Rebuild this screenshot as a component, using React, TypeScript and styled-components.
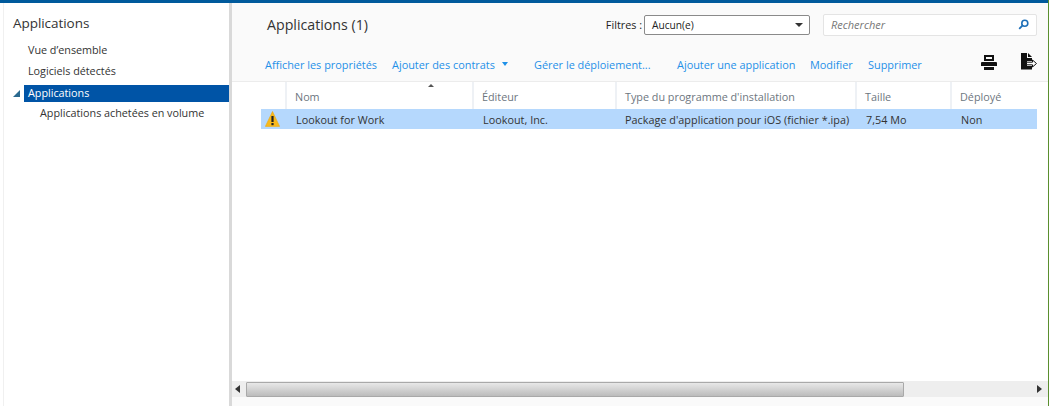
import React from "react";
import styled, { createGlobalStyle } from "styled-components";

const GlobalStyle = createGlobalStyle`
  html, body {
    margin: 0;
    padding: 0;
    background: #fff;
    overflow: hidden;
  }
  body {
    font-family: "Open Sans", "Liberation Sans", sans-serif;
    font-size: 11px;
    color: #333;
  }
`;

const Page = styled.div`
  width: 1049px;
  height: 406px;
  display: flex;
  flex-direction: column;
  box-sizing: border-box;
  border-right: 1px solid #5a8f2e;
`;

const TopBar = styled.div`
  height: 3px;
  background: #005a9c;
  flex: none;
`;

const Body = styled.div`
  flex: 1;
  display: flex;
  min-height: 0;
`;

const Sidebar = styled.nav`
  width: 226px;
  margin-left: 3px;
  border-left: 1px solid #f0f0f0;
  box-sizing: border-box;
  background: #fff;
  flex: none;
  padding-top: 10px;
`;

const SidebarTitle = styled.h2`
  margin: 0 0 6px 9px;
  font-size: 13.5px;
  line-height: 20px;
  font-weight: 400;
  color: #333;
  letter-spacing: -0.05px;
`;

const NavRow = styled.div<{ $selected?: boolean; $indent?: number }>`
  box-sizing: border-box;
  height: ${(p) => (p.$selected ? "17px" : "21px")};
  margin-top: ${(p) => (p.$selected ? "4px" : "0")};
  margin-left: 20px;
  padding-left: ${(p) => p.$indent ?? 4}px;
  padding-bottom: ${(p) => (p.$selected ? "2px" : "0")};
  display: flex;
  align-items: center;
  position: relative;
  font-size: 10.8px;
  letter-spacing: -0.02px;
  color: ${(p) => (p.$selected ? "#fff" : "#333")};
  background: ${(p) => (p.$selected ? "#0054a6" : "transparent")};
`;

const Expander = styled.span`
  position: absolute;
  left: -11px;
  top: 5px;
  width: 0;
  height: 0;
  border-style: solid;
  border-width: 0 0 7px 7px;
  border-color: transparent transparent #2b6a8f transparent;
`;

const Gutter = styled.div`
  width: 3px;
  background: #d9d9d9;
  flex: none;
`;

const Main = styled.main`
  flex: 1;
  min-width: 0;
  display: flex;
  flex-direction: column;
  background: #fafafa;
`;

const Header = styled.div`
  height: 40px;
  flex: none;
  display: flex;
  align-items: center;
  padding: 3px 0 0 35px;
  box-sizing: border-box;
`;

const Title = styled.h1`
  margin: 0;
  font-size: 14.2px;
  font-weight: 400;
  color: #333;
  flex: 1;
`;

const FilterLabel = styled.span`
  font-size: 10.8px;
  color: #222;
  margin-right: 2px;
`;

const FilterSelect = styled.div`
  width: 166px;
  height: 20px;
  box-sizing: border-box;
  border: 1px solid #8a8a8a;
  border-radius: 2px;
  background: #fff;
  display: flex;
  align-items: center;
  justify-content: space-between;
  padding: 0 6px 0 7px;
  font-size: 10.2px;
  color: #222;
  margin-right: 13px;
`;

const SelectCaret = styled.span`
  width: 0;
  height: 0;
  border-style: solid;
  border-width: 4px 4px 0 4px;
  border-color: #333 transparent transparent transparent;
`;

const SearchBox = styled.div`
  width: 214px;
  height: 22px;
  box-sizing: border-box;
  border: 1px solid #e4e4e4;
  border-radius: 2px;
  background: #fff;
  display: flex;
  align-items: center;
  justify-content: space-between;
  padding: 0 7px;
  font-size: 11px;
  font-style: italic;
  color: #777;
  margin-right: 11px;
`;

const Toolbar = styled.div`
  height: 39px;
  flex: none;
  display: flex;
  align-items: center;
  padding: 4px 0 0 33px;
  box-sizing: border-box;
  border-bottom: 1px solid #ececec;
`;

const Action = styled.a<{ $width: number }>`
  width: ${(p) => p.$width}px;
  flex: none;
  font-size: 10.9px;
  color: #1e90e8;
  white-space: nowrap;
  display: flex;
  align-items: center;
  gap: 7px;
`;

const ActionCaret = styled.span`
  width: 0;
  height: 0;
  border-style: solid;
  border-width: 4px 3.5px 0 3.5px;
  border-color: #1e90e8 transparent transparent transparent;
`;

const ToolIcons = styled.div`
  margin-left: auto;
  display: flex;
  gap: 24px;
  margin-right: 11px;
  margin-bottom: 5px;
  align-items: flex-end;
`;

const Table = styled.div`
  flex: 1;
  min-height: 0;
  background: #fff;
  display: flex;
  flex-direction: column;
`;

const HeadRow = styled.div`
  height: 27px;
  flex: none;
  margin-left: 30px;
  margin-right: 11px;
  display: grid;
  grid-template-columns: 23px 187px 143px 240px 95px 1fr;
`;

const HeadCell = styled.div<{ $sorted?: boolean }>`
  position: relative;
  display: flex;
  align-items: flex-end;
  padding: 0 0 5px 8px;
  font-size: 10.8px;
  color: #6d7680;
  border-left: 2px solid #eef1f5;
  &:first-child {
    border-left: none;
  }
  ${(p) =>
    p.$sorted &&
    `&::after {
      content: "";
      position: absolute;
      right: 38px;
      top: 2px;
      border-style: solid;
      border-width: 0 3.5px 3.5px 3.5px;
      border-color: transparent transparent #555 transparent;
    }`}
`;

const DataRow = styled.div`
  height: 20px;
  flex: none;
  margin-left: 29px;
  margin-right: 11px;
  background: #b5d8fd;
  display: grid;
  grid-template-columns: 26px 187px 142px 241px 95px 1fr;
  align-items: center;
`;

const DataCell = styled.div`
  padding-left: 9px;
  font-size: 10.8px;
  letter-spacing: 0.03px;
  color: #333;
  white-space: nowrap;
`;

const IconCell = styled.div`
  display: flex;
  align-items: center;
  padding-left: 4px;
`;

const Spacer = styled.div`
  flex: 1;
`;

const ScrollBar = styled.div`
  height: 16px;
  flex: none;
  background: #eeeeee;
  display: flex;
  align-items: center;
  padding: 0 6px 0 3px;
`;

const Arrow = styled.span<{ $right?: boolean }>`
  width: 0;
  height: 0;
  flex: none;
  border-style: solid;
  border-width: ${(p) => (p.$right ? "4px 0 4px 5px" : "4px 5px 4px 0")};
  border-color: ${(p) =>
    p.$right
      ? "transparent transparent transparent #333"
      : "transparent #333 transparent transparent"};
`;

const Thumb = styled.div`
  width: 658px;
  height: 15px;
  margin-left: 6px;
  box-sizing: border-box;
  border: 1px solid #a9a9a9;
  border-radius: 1px;
  background: linear-gradient(#e8e8e8, #bcbcbc);
`;

const Footer = styled.div`
  height: 9px;
  flex: none;
  background: #fafafa;
`;

const WarningIcon = () => (
  <svg width="15" height="16" viewBox="0 0 15 16">
    <path d="M7.5 0.5 L14.6 15.4 H0.4 Z" fill="#f8b91c" stroke="#eda80c" strokeWidth="0.6" strokeLinejoin="round" />
    <rect x="6.4" y="5" width="2.2" height="6" fill="#222" />
    <rect x="6.4" y="12" width="2.2" height="2.2" fill="#222" />
  </svg>
);

const SearchIcon = () => (
  <svg width="11" height="11" viewBox="0 0 11 11">
    <circle cx="6.8" cy="4.2" r="3" fill="none" stroke="#1d6fb8" strokeWidth="1.6" />
    <path d="M4.6 6.4 L1.2 9.8" stroke="#1d6fb8" strokeWidth="1.8" />
  </svg>
);

const PrintIcon = () => (
  <svg width="16" height="15" viewBox="0 0 16 15">
    <path d="M3 0 H13 V6 H3 Z M5 2 V4 H11 V2 Z" fill="#111" fillRule="evenodd" />
    <path d="M1 7 H15 Q16 7 16 8 V11 H0 V8 Q0 7 1 7 Z" fill="#111" />
    <path d="M3 12 H13 V15 H3 Z" fill="#111" />
  </svg>
);

const ExportIcon = () => (
  <svg width="16" height="17" viewBox="0 0 16 17">
    <path d="M0 0 H6 V5 H11 V8 H6 V13 H11 V16.5 H0 Z" fill="#111" />
    <path d="M7 0 L11 4 H7 Z" fill="#111" />
    <path d="M5.5 9.2 H11.5 V7 L15.5 10.5 L11.5 14 V11.8 H5.5 Z" fill="#fff" stroke="#111" strokeWidth="1" />
  </svg>
);

const App: React.FC = () => {
  return (
    <Page>
      <GlobalStyle />
      <TopBar />
      <Body>
        <Sidebar>
          <SidebarTitle>Applications</SidebarTitle>
          <NavRow $indent={4}>Vue d’ensemble</NavRow>
          <NavRow $indent={4}>Logiciels détectés</NavRow>
          <NavRow $selected $indent={4}>
            <Expander />
            Applications
          </NavRow>
          <NavRow $indent={16}>Applications achetées en volume</NavRow>
        </Sidebar>
        <Gutter />
        <Main>
          <Header>
            <Title>Applications (1)</Title>
            <FilterLabel>Filtres :</FilterLabel>
            <FilterSelect>
              Aucun(e)
              <SelectCaret />
            </FilterSelect>
            <SearchBox>
              Rechercher
              <SearchIcon />
            </SearchBox>
          </Header>
          <Toolbar>
            <Action $width={127}>Afficher les propriétés</Action>
            <Action $width={142}>
              Ajouter des contrats
              <ActionCaret />
            </Action>
            <Action $width={143}>Gérer le déploiement...</Action>
            <Action $width={133}>Ajouter une application</Action>
            <Action $width={58}>Modifier</Action>
            <Action $width={60}>Supprimer</Action>
            <ToolIcons>
              <PrintIcon />
              <ExportIcon />
            </ToolIcons>
          </Toolbar>
          <Table>
            <HeadRow>
              <HeadCell />
              <HeadCell $sorted>Nom</HeadCell>
              <HeadCell>Éditeur</HeadCell>
              <HeadCell>Type du programme d&apos;installation</HeadCell>
              <HeadCell>Taille</HeadCell>
              <HeadCell>Déployé</HeadCell>
            </HeadRow>
            <DataRow>
              <IconCell>
                <WarningIcon />
              </IconCell>
              <DataCell>Lookout for Work</DataCell>
              <DataCell>Lookout, Inc.</DataCell>
              <DataCell>Package d&apos;application pour iOS (fichier *.ipa)</DataCell>
              <DataCell>7,54 Mo</DataCell>
              <DataCell>Non</DataCell>
            </DataRow>
            <Spacer />
            <ScrollBar>
              <Arrow />
              <Thumb />
              <Spacer />
              <Arrow $right />
            </ScrollBar>
          </Table>
          <Footer />
        </Main>
      </Body>
    </Page>
  );
};

export default App;
